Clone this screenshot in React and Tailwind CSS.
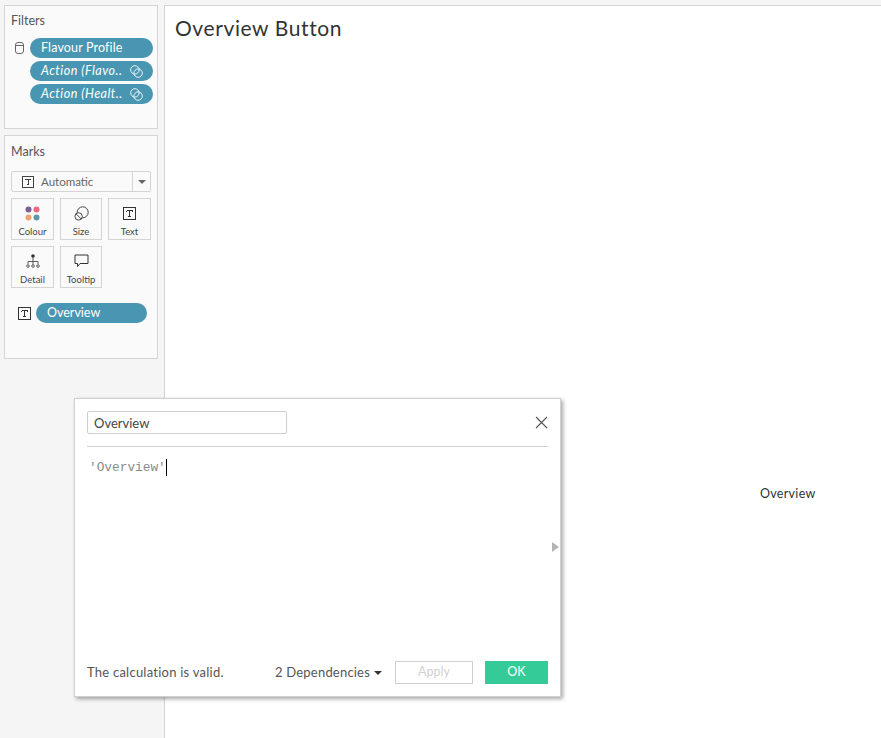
import React from "react";

const font = { fontFamily: "Lato, 'Open Sans', sans-serif" };

function TIcon({ className = "" }) {
  return (
    <svg width="13" height="13" viewBox="0 0 13 13" className={className} fill="none" stroke="#333" strokeWidth="1" shapeRendering="crispEdges">
      <rect x="0.5" y="0.5" width="12" height="12" />
      <path d="M3.5 3.5h6M6.5 3.5v6M5 9.5h3M3.5 3.5v1M9.5 3.5v1" />
    </svg>
  );
}

function LinkIcon() {
  return (
    <svg width="13" height="13" viewBox="0 0 13 13" fill="none" stroke="#fff" strokeWidth="0.9">
      <circle cx="4.9" cy="4.9" r="4.2" />
      <circle cx="8.1" cy="8.1" r="4.2" />
    </svg>
  );
}

function Pill({ children, italic, link, className = "" }) {
  return (
    <div className={`h-[20px] rounded-full bg-[#4996b2] text-white text-[12.5px] flex items-center justify-between pl-[11px] pr-[10px] ${italic ? "italic tracking-[0.5px]" : ""} ${className}`}>
      <span className="leading-none whitespace-nowrap">{children}</span>
      {link && <LinkIcon />}
    </div>
  );
}

function Card({ label, className = "w-[43px]", children }) {
  return (
    <div className={`${className} h-[42px] border border-[#d4d4d4] flex flex-col items-center justify-between pt-[6px] pb-[1px]`}>
      <div className="h-[16px] flex items-center justify-center">{children}</div>
      <span className="text-[9.5px] leading-[12px] text-[#444]">{label}</span>
    </div>
  );
}

export default function App() {
  return (
    <div className="relative w-[881px] h-[738px] overflow-hidden bg-[#f5f5f5] flex" style={font}>
      <aside className="w-[164px] shrink-0 pt-[5px] pl-[4px] flex flex-col gap-[6px]">
        <section className="w-[154px] h-[124px] border border-[#d4d4d4] bg-[#fafafa] pl-[6px] pr-[4px] pt-[7px]">
          <h2 className="text-[12.5px] leading-[15px] text-[#555]">Filters</h2>
          <div className="mt-[10px] flex flex-col gap-[3px] pl-[19px] relative">
            <svg className="absolute left-[4px] top-[4px]" width="9" height="12" viewBox="0 0 9 12" fill="none" stroke="#666" strokeWidth="1">
              <rect x="0.5" y="0.5" width="8" height="11" rx="2.5" />
              <path d="M0.5 3.5h8" />
            </svg>
            <Pill className="tracking-[0.15px]">Flavour Profile</Pill>
            <Pill italic link>Action (Flavo..</Pill>
            <Pill italic link>Action (Healt..</Pill>
          </div>
        </section>

        <section className="w-[154px] h-[224px] border border-[#d4d4d4] bg-[#fafafa] pl-[6px] pt-[8px]">
          <h2 className="text-[12.5px] leading-[15px] text-[#555]">Marks</h2>
          <div className="mt-[12px] w-[140px] h-[21px] border border-[#d4d4d4] rounded-[2px] flex items-center text-[11.5px] text-[#666]">
            <div className="flex-1 flex items-center pl-[10px] gap-[7px]">
              <TIcon className="w-[12px] h-[12px]" />
              <span>Automatic</span>
            </div>
            <div className="w-[18px] h-full border-l border-[#d4d4d4] flex items-center justify-center">
              <div className="w-0 h-0 border-x-[4px] border-x-transparent border-t-[4px] border-t-[#666]" />
            </div>
          </div>
          <div className="mt-[6px] flex flex-wrap w-[145px] gap-x-[6px] gap-y-[6px]">
            <Card label="Colour">
              <svg width="15" height="15" viewBox="0 0 15 15">
                <circle cx="3.5" cy="3.5" r="3" fill="#7b5f94" />
                <circle cx="11.5" cy="3.5" r="3" fill="#f0687f" />
                <circle cx="3.5" cy="11.5" r="3" fill="#f2a26e" />
                <circle cx="11.5" cy="11.5" r="3" fill="#5d98a5" />
              </svg>
            </Card>
            <Card label="Size" className="w-[42px]">
              <svg width="15" height="15" viewBox="0 0 15 15" fill="none" stroke="#333" strokeWidth="0.9">
                <circle cx="8.7" cy="6.3" r="5.5" />
                <circle cx="4.6" cy="10.4" r="3.7" fill="#fafafa" />
                <path d="M2 7.8l5.2 5.2" />
              </svg>
            </Card>
            <Card label="Text"><TIcon /></Card>
            <Card label="Detail">
              <svg width="14" height="15" viewBox="0 0 14 15" fill="none" stroke="#333" strokeWidth="0.8">
                <circle cx="7" cy="2" r="1.8" fill="#333" stroke="none" />
                <path d="M7 3.5v7M2 10V7.5h10V10" />
                <circle cx="2" cy="12" r="1.3" />
                <circle cx="7" cy="12" r="1.3" />
                <circle cx="12" cy="12" r="1.3" />
              </svg>
            </Card>
            <Card label="Tooltip" className="w-[42px]">
              <svg width="15" height="14" viewBox="0 0 15 14" fill="none" stroke="#333" strokeWidth="1">
                <path d="M1 1h13v8.5H6l-2.5 3v-3H1z" />
              </svg>
            </Card>
          </div>
          <div className="mt-[15px] flex items-center pl-[7px] gap-[5px]">
            <TIcon />
            <Pill className="w-[111px]">Overview</Pill>
          </div>
        </section>
      </aside>

      <main className="flex-1 mt-[5px] bg-white border-l border-t border-[#d4d4d4] pl-[10px] pt-[9px]">
        <h1 className="text-[21px] leading-[26px] text-[#333] tracking-[0.6px]">Overview Button</h1>
        <p className="mt-[445px] ml-[585px] text-[12.5px] tracking-[0.3px] leading-[16px] text-[#333]">Overview</p>
      </main>

      <div className="absolute left-[74px] top-[398px] w-[487px] h-[299px] bg-white border border-[#d0d0d0] shadow-[2px_2px_4px_rgba(0,0,0,0.35)] flex flex-col px-[12px]">
        <div className="h-[48px] shrink-0 border-b border-[#cfcfcf] flex items-center justify-between">
          <div className="w-[200px] h-[23px] border border-[#cfcfcf] rounded-[2px] flex items-center pl-[6px] pt-[2px] text-[13px] text-[#444]">Overview</div>
          <svg width="13" height="13" viewBox="0 0 13 13" stroke="#555" strokeWidth="1.1">
            <path d="M1 1l11 11M12 1L1 12" />
          </svg>
        </div>
        <div className="relative flex-1 pt-[12px] pl-[2px] flex items-start">
          <span className="text-[12.8px] leading-[17px] text-[#8a8a8a]" style={{ fontFamily: "'Liberation Mono', monospace" }}>'Overview'</span>
          <span className="w-px h-[17px] bg-black" />
          <div className="absolute right-[-11px] top-[95px] w-0 h-0 border-y-[5px] border-y-transparent border-l-[7px] border-l-[#b5b5b5]" />
        </div>
        <div className="h-[35px] shrink-0 flex items-start justify-between">
          <span className="text-[13px] leading-[23px] tracking-[0.24px] text-[#555]">The calculation is valid.</span>
          <div className="flex items-center">
            <span className="text-[13px] leading-[23px] tracking-[0.2px] text-[#555]">2 Dependencies</span>
            <div className="ml-[4px] w-0 h-0 border-x-[4px] border-x-transparent border-t-[4px] border-t-[#333]" />
            <div className="ml-[13px] w-[78px] h-[23px] border border-[#cfcfcf] flex items-center justify-center text-[12.5px] text-[#d0d0d0]">Apply</div>
            <div className="ml-[12px] w-[63px] h-[23px] bg-[#35cb98] flex items-center justify-center text-[12.5px] text-white">OK</div>
          </div>
        </div>
      </div>
    </div>
  );
}
